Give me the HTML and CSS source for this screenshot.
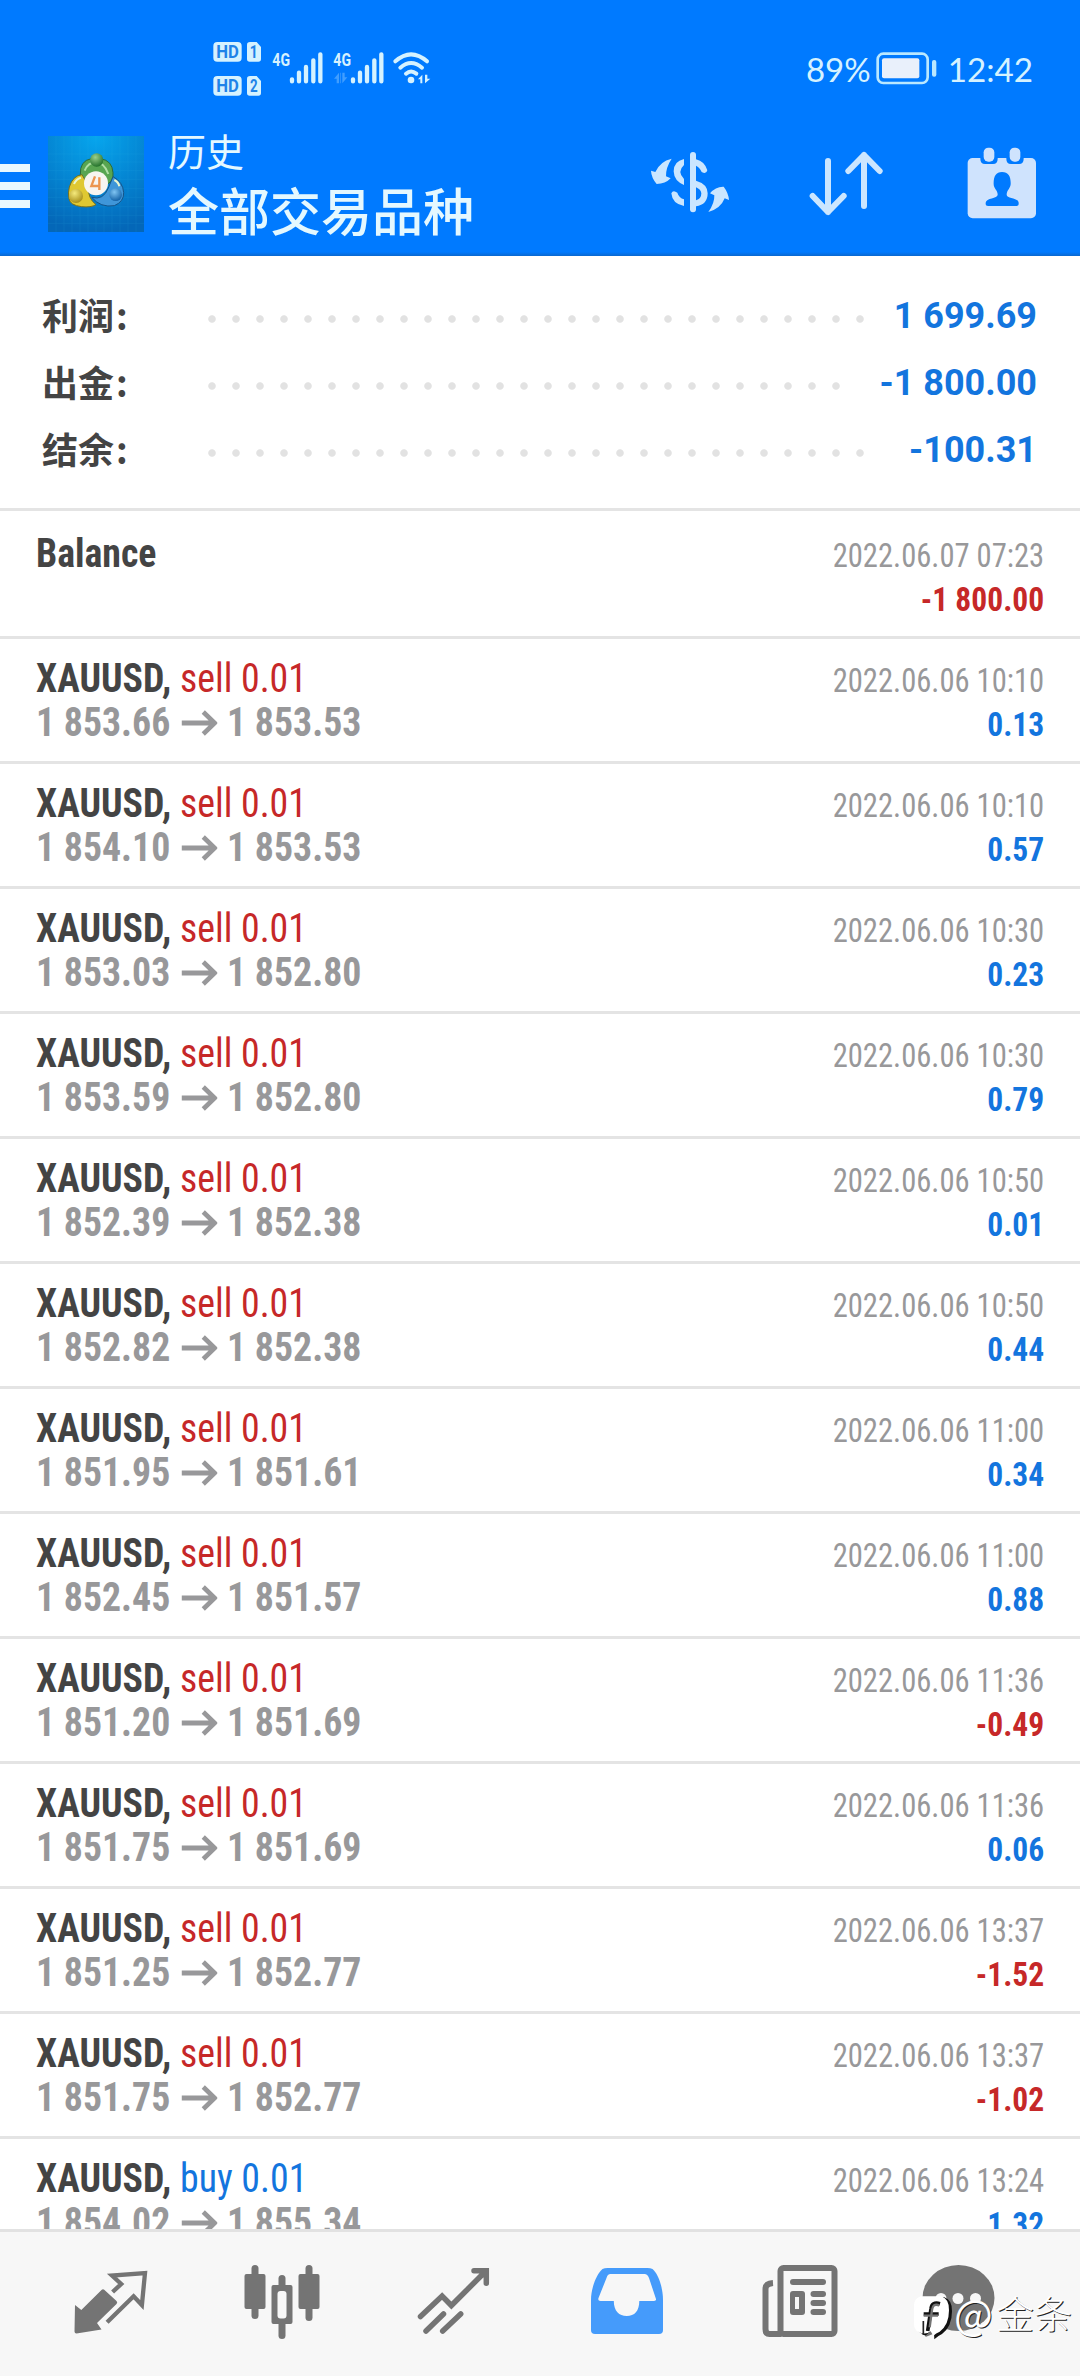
FILE: index.html
```html
<!DOCTYPE html>
<html lang="zh-CN">
<head>
    <meta charset="UTF-8">
    <meta name="viewport" content="width=device-width, initial-scale=1.0">
    <title>历史</title>
    <link rel="stylesheet" href="styles.css">
</head>
<body>
    <div class="app">
        <header class="header">
            <div class="status-bar">
                <svg class="status-left" width="300" height="90" viewBox="0 0 900 270" fill="#d5f2ff">
                    <rect x="100" y="66" width="85" height="59" rx="12"/>
                    <rect x="100" y="168" width="85" height="59" rx="12"/>
                    <path d="M210 66h20l13 15v36q0 8-8 8h-26q-8 0-8-8V74q0-8 9-8z"/>
                    <path d="M210 168h20l13 15v36q0 8-8 8h-26q-8 0-8-8v-43q0-8 9-8z"/>
                    <g class="badge-text">
                        <text x="109" y="113" textLength="68" lengthAdjust="spacingAndGlyphs">HD</text>
                        <text x="109" y="215" textLength="68" lengthAdjust="spacingAndGlyphs">HD</text>
                        <text x="209" y="113" textLength="24" lengthAdjust="spacingAndGlyphs">1</text>
                        <text x="210" y="215" textLength="23" lengthAdjust="spacingAndGlyphs">2</text>
                    </g>
                    <g class="net-text">
                        <text x="277" y="138" textLength="53" lengthAdjust="spacingAndGlyphs">4G</text>
                        <text x="460" y="138" textLength="53" lengthAdjust="spacingAndGlyphs">4G</text>
                    </g>
                    <g stroke="#d5f2ff" stroke-width="13" stroke-linecap="round">
                        <path d="M336 178v6M357 158v26M378 141v43M400 121v63M421 103v81"/>
                        <path d="M519 178v6M540 158v26M561 141v43M583 121v63M604 103v81"/>
                    </g>
                    <path d="M462 176l15-18v32h-7v-14zM483 158v32l-2 0v-32zM487 158v32l15-18h-8v-14z" opacity=".3"/>
                    <g fill="none" stroke="#d5f2ff" stroke-width="12" stroke-linecap="round">
                        <path d="M646 124q47-42 95 0M661 143q32-28 65 0M678 161q15-13 31 0"/>
                    </g>
                    <circle cx="693" cy="180" r="10"/>
                    <path d="M714 178l13-14v26h-6v-12zM735 164v26l16-14h-9v-12z"/>
                </svg>
                <svg class="status-right" width="300" height="80" viewBox="0 0 900 240" fill="#d5f2ff">
                    <g class="clock-text">
                        <text x="78" y="157" textLength="194" lengthAdjust="spacingAndGlyphs">89%</text>
                        <text x="503" y="157" textLength="256" lengthAdjust="spacingAndGlyphs">12:42</text>
                    </g>
                    <rect x="293" y="71" width="150" height="88" rx="17" fill="none" stroke="#b9e8ff" stroke-width="8"/>
                    <rect x="306" y="85" width="112" height="60" rx="6" fill="#e9f0fb"/>
                    <rect x="456" y="90" width="13" height="50" rx="6" fill="#b9e8ff"/>
                </svg>
            </div>
            <div class="toolbar">
                <div class="menu"><i></i><i></i><i></i></div>
                <svg class="logo" width="96" height="96" viewBox="0 0 288 288">
                    <defs>
                        <radialGradient id="sky" cx=".5" cy="0" r="1">
                            <stop offset="0" stop-color="#06a6ee"/>
                            <stop offset=".6" stop-color="#0481cf"/>
                            <stop offset="1" stop-color="#0467b8"/>
                        </radialGradient>
                        <radialGradient id="green" cx=".4" cy=".3" r=".7"><stop offset="0" stop-color="#9ad08b"/><stop offset="1" stop-color="#25722c"/></radialGradient>
                        <radialGradient id="gold" cx=".4" cy=".3" r=".7"><stop offset="0" stop-color="#f5ea7c"/><stop offset="1" stop-color="#a8901a"/></radialGradient>
                        <radialGradient id="blue" cx=".4" cy=".3" r=".7"><stop offset="0" stop-color="#7fc4f2"/><stop offset="1" stop-color="#1664a8"/></radialGradient>
                    </defs>
                    <rect width="288" height="288" fill="url(#sky)"/>
                    <path d="M24 0v288M48 0v288M72 0v288M96 0v288M120 0v288M144 0v288M168 0v288M192 0v288M216 0v288M240 0v288M264 0v288M0 54h288M0 78h288M0 104h288M0 130h288M0 158h288M0 184h288M0 212h288M0 238h288M0 262h288" stroke="#3cc3ee" stroke-width="2" opacity=".14"/>
                    <path d="M97 116q-2-42 33-48h28q35 6 37 42 2 24-15 33l-42-24-34 14z" fill="#58a551" stroke="#2c6b38" stroke-width="3"/>
                    <path d="M102 116q-28 3-38 37-5 18-1 35 3 20 38 24 28 3 43-6-25-18-24-58z" fill="#dfc832" stroke="#78701c" stroke-width="3"/>
                    <path d="M195 122q30 16 32 48 1 27-28 39-41 7-68-25 35 10 50-28z" fill="#3f96d9" stroke="#155387" stroke-width="3"/>
                    <path d="M110 104q10-25 34-25t37 35" fill="none" stroke="#b0dfa5" stroke-width="6"/>
                    <path d="M78 144q6-15 21-19M214 151q-3-14-15-19" fill="none" stroke="#e9f6d0" stroke-width="6"/>
                    <circle cx="146" cy="72" r="20" fill="url(#green)"/>
                    <circle cx="84" cy="180" r="21" fill="url(#gold)"/>
                    <circle cx="203" cy="176" r="19" fill="url(#blue)"/>
                    <circle cx="144" cy="142" r="36" fill="#f7f5f0"/>
                    <path d="M141 121l-11 29h26M154 124v38" fill="none" stroke="#ec9650" stroke-width="7"/>
                </svg>
                <div class="titles">
                    <div class="title-small">历史</div>
                    <div class="title-big">全部交易品种</div>
                </div>
                <svg class="ico-currency" width="80" height="64" viewBox="90 60 240 192" fill="#cbe6ff">
                    <path d="M155 86Q120 94 106 126L93 122Q94 143 110 162Q136 162 152 145L138 139Q137 113 155 86z"/>
                    <path d="M265 246Q284 220 283 196L270 190Q287 169 311 170Q325 188 327 210L314 205Q302 236 265 246z"/>
                    <rect x="210" y="66" width="18" height="181" rx="9"/>
                    <path d="M192 87Q161 94 161 124Q162 153 192 165V147Q170 125 192 105zM192 208Q177 204 172 188Q159 178 154 190Q157 222 192 228z"/>
                    <path d="M228 88Q254 94 262 121Q259 134 245 126Q238 111 228 107zM228 152Q263 162 263 190Q263 224 228 229V211Q244 207 244 190Q243 178 228 172z"/>
                </svg>
                <svg class="ico-sort" width="76" height="66" viewBox="564 60 228 198" fill="none" stroke="#cbe6ff" stroke-width="18" stroke-linecap="round" stroke-linejoin="round">
                    <path d="M624 93v153M578 198l46 48 47-48M732 228V75M685 123l47-48 47 48"/>
                </svg>
                <svg class="ico-calendar" width="72" height="74" viewBox="1038 48 216 222" fill="#cfe3fd">
                    <rect x="1043" y="84" width="205" height="181" rx="15"/>
                    <path d="M1081 76h52v10q0 16-14 16h-24q-14 0-14-16zM1159 76h52v10q0 16-14 16h-24q-14 0-14-16z" fill="#007aff"/>
                    <rect x="1091" y="53" width="32" height="42" rx="14"/>
                    <rect x="1169" y="53" width="32" height="42" rx="14"/>
                    <path d="M1146 126c20 0 27 15 26 37-1 12-12 19-12 31 0 12 35 9 36 24v5q0 5-7 5h-85q-7 0-7-5v-5c1-15 36-12 36-24 0-12-12-19-12-31-1-22 6-37 25-37z" fill="#007aff"/>
                </svg>
            </div>
        </header>

        <section class="summary">
            <div class="sum-row"><span class="sum-label">利润<span class="colon">:</span></span><span class="dots"></span><span class="sum-value">1 699.69</span></div>
            <div class="sum-row"><span class="sum-label">出金<span class="colon">:</span></span><span class="dots dots-short"></span><span class="sum-value">-1 800.00</span></div>
            <div class="sum-row"><span class="sum-label">结余<span class="colon">:</span></span><span class="dots"></span><span class="sum-value">-100.31</span></div>
        </section>

        <main class="deals" id="deals">
            <div class="deal deal-balance">
                <div class="deal-left"><div><b>Balance</b></div></div>
                <div class="deal-right">
                    <div class="time">2022.06.07 07:23</div>
                    <div class="amount red">-1 800.00</div>
                </div>
            </div>
        </main>

        <nav class="tabs">
            <svg width="104" height="76" viewBox="58 144 104 76">
                <path d="M75 185l6.300 5L101.500 170q1.500-1.500 3 0l12 11q1.500 1.500 0 3L97 203l4.500 6.500-25 4q-2 0-2-2z" fill="#747474"/>
                <path d="M112.600 172l8.600-8-9.200-8.500 33-2.500-3.100 32-8.300-8.700-26.500 26" fill="none" stroke="#747474" stroke-width="4.300"/>
            </svg>
            <svg width="104" height="76" viewBox="230.500 144 104 76" fill="#747474">
                <rect x="244" y="154" width="21" height="35" rx="2"/>
                <rect x="251" y="145" width="7" height="54" rx="3.500"/>
                <rect x="298" y="154" width="21" height="35" rx="2"/>
                <rect x="305" y="145" width="7" height="56" rx="3.500"/>
                <rect x="278" y="155" width="7" height="64" rx="3.500"/>
                <rect x="271" y="165" width="21" height="39" rx="2"/>
                <rect x="277" y="171" width="9" height="27.500" rx="3" fill="#f7f7f7"/>
            </svg>
            <svg width="104" height="76" viewBox="403 144 104 76" fill="none" stroke="#747474" stroke-width="5.500" stroke-linecap="round">
                <path d="M420.500 196.500l21.600-20.500 9.300 9.500 34.500-34.500M474 150.700h12.300v12.500" stroke-linejoin="miter"/>
                <path d="M426 211l17.500-17M442.700 211l18-17"/>
            </svg>
            <svg width="104" height="76" viewBox="575.500 144 104 76">
                <path d="M602 149q2-1 5-1h40q3 0 5 1c6 5 10.500 19 10.500 31v30q0 4-4 4h-64q-4 0-4-4v-30c0-12 5.500-26 11.500-31z" fill="#459bfb"/>
                <path d="M610 154h34q3 0 4.500 4l7 21q.5 2-2 2h-14.700c0 10-4.800 15-12.500 15s-13-5-13-15H600q-3 0-2-3l8-20q1-4 4-4z" fill="#f7f7f7"/>
            </svg>
            <svg width="104" height="76" viewBox="748 144 104 76" fill="#747474">
                <rect x="780.500" y="148" width="54" height="66" rx="3" fill="none" stroke="#747474" stroke-width="6"/>
                <path d="M773 163q-7.500.5-7.500 6v40q0 5 4 5h12" fill="none" stroke="#747474" stroke-width="6"/>
                <rect x="790" y="159" width="36" height="6" rx="3"/>
                <rect x="790" y="171" width="15" height="24" rx="3"/>
                <rect x="795" y="177" width="4" height="12" fill="#f7f7f7"/>
                <rect x="810.500" y="171" width="15.500" height="6" rx="3"/>
                <rect x="810.500" y="180" width="15.500" height="6" rx="3"/>
                <rect x="810.500" y="189" width="15.500" height="6" rx="3"/>
            </svg>
            <svg width="104" height="76" viewBox="920.500 144 104 76">
                <ellipse cx="958" cy="178" rx="36" ry="33" fill="#747474"/>
                <path d="M925 190v27l20-8z" fill="#747474"/>
                <g fill="#f7f7f7"><circle cx="940.500" cy="178.500" r="5.500"/><circle cx="957.500" cy="178.500" r="5.500"/><circle cx="975" cy="178.500" r="5.500"/></g>
            </svg>
        </nav>

        <div class="mark">
            <svg width="40" height="46" viewBox="102 166 120 138">
                <path d="M132 172h58q24 8 23 42 0 46-30 68-13 6-23 16l-1-18-10-7-16 14-19-12q-12-8-12-25v-50q0-20 18-26z" transform="translate(3 1)" fill="#111"/>
                <path d="M122 170h62q24 8 23 42 0 44-28 64-11 5-19 12l-8-13q-15 12-35 3-15-8-15-26v-56q0-18 20-26z" fill="#fff"/>
                <path d="M180 192q-25-7-27 16l-10 66M131 223h45" fill="none" stroke="#111" stroke-width="11"/>
                <path d="M178 197q-20-7-22 14l-7 52M131 228h43" fill="none" stroke="#747474" stroke-width="7"/>
                <path d="M130 244v42" fill="none" stroke="#222" stroke-width="5"/>
            </svg>
            <span class="at">@</span><span>金条</span>
        </div>
    </div>

    <script>
        const deals = [
            ['sell', '1 853.66', '1 853.53', '10:10', '0.13'],
            ['sell', '1 854.10', '1 853.53', '10:10', '0.57'],
            ['sell', '1 853.03', '1 852.80', '10:30', '0.23'],
            ['sell', '1 853.59', '1 852.80', '10:30', '0.79'],
            ['sell', '1 852.39', '1 852.38', '10:50', '0.01'],
            ['sell', '1 852.82', '1 852.38', '10:50', '0.44'],
            ['sell', '1 851.95', '1 851.61', '11:00', '0.34'],
            ['sell', '1 852.45', '1 851.57', '11:00', '0.88'],
            ['sell', '1 851.20', '1 851.69', '11:36', '-0.49'],
            ['sell', '1 851.75', '1 851.69', '11:36', '0.06'],
            ['sell', '1 851.25', '1 852.77', '13:37', '-1.52'],
            ['sell', '1 851.75', '1 852.77', '13:37', '-1.02'],
            ['buy', '1 854.02', '1 855.34', '13:24', '1.32']
        ];

        const arrow = '<svg class="arrow" width="38" height="26" viewBox="0 0 38 26"><path d="M0 13h35M23 2l12 11-12 11" fill="none" stroke="#98989a" stroke-width="5"/></svg>';

        document.getElementById('deals').innerHTML += deals.map(([type, open, close, time, profit]) => `
            <div class="deal">
                <div class="deal-left">
                    <div><b>XAUUSD,</b> <span class="${type === 'sell' ? 'red' : 'blue'}">${type} 0.01</span></div>
                    <div class="prices"><span>${open}</span>${arrow}<span>${close}</span></div>
                </div>
                <div class="deal-right">
                    <div class="time">2022.06.06 ${time}</div>
                    <div class="amount ${profit[0] === '-' ? 'red' : 'blue'}">${profit}</div>
                </div>
            </div>`).join('');
    </script>
</body>
</html>
```
FILE: styles.css
```css
* {
    box-sizing: border-box;
}
body {
    margin: 0;
    background: #fff;
    font-family: Roboto, "Noto Sans CJK SC", sans-serif;
    color: #444;
}
svg {
    display: block;
    flex: none;
}
.app {
    position: relative;
    width: 1080px;
    height: 2376px;
    overflow: hidden;
    display: flex;
    flex-direction: column;
}
.header {
    height: 256px;
    flex: none;
    background: linear-gradient(#007aff 252px, #0a68cf 256px);
}
.status-bar {
    height: 110px;
    padding: 20px 0 0 180px;
    display: flex;
}
.status-right {
    margin: 10px 0 0 300px;
}
.badge-text {
    font: 700 54px Roboto, sans-serif;
    fill: #1f83e8;
}
.net-text {
    font: 700 54px Roboto, sans-serif;
}
.clock-text {
    font: 400 101px Lato, sans-serif;
}
.toolbar {
    display: flex;
    align-items: flex-start;
}
.menu {
    width: 30px;
    margin: 54px 18px 0 0;
    display: flex;
    flex-direction: column;
    gap: 10px;
}
.menu i {
    height: 8px;
    background: #e9f8ff;
}
.logo {
    margin-top: 26px;
}
.titles {
    width: 481px;
    margin: 19px 0 0 24px;
    color: #e4f8ff;
    white-space: nowrap;
}
.title-small {
    font-size: 38px;
    line-height: 48px;
}
.title-big {
    font-size: 51px;
    line-height: 73px;
    font-weight: 500;
}
.ico-currency {
    margin: 40px 0 0 1px;
}
.ico-sort {
    margin: 40px 0 0 78px;
}
.ico-calendar {
    margin: 36px 0 0 82px;
}
.summary {
    height: 255px;
    flex: none;
    padding: 27px 43px 0 42px;
    border-bottom: 3px solid #e4e4e4;
}
.sum-row {
    height: 67px;
    display: flex;
    align-items: center;
}
.sum-label {
    width: 158px;
    font-family: "Noto Sans CJK SC", sans-serif;
    font-size: 36px;
    line-height: 63px;
    height: 67px;
    font-weight: 700;
}
.colon {
    margin-left: 2px;
}
.dots {
    width: 672px;
    height: 8px;
    margin-top: 5px;
    background: radial-gradient(circle, #e2e2e2 3.300px, transparent 4.200px) 0 0 / 24px 8px;
}
.dots-short {
    width: 648px;
}
.sum-value {
    margin-left: auto;
    font-size: 36px;
    line-height: 67px;
    font-weight: 700;
    color: #1375de;
}
.deals {
    flex: 1;
    min-height: 0;
    overflow: hidden;
}
.deal {
    height: 125px;
    padding: 17px 36px 0;
    border-bottom: 3px solid #e4e4e4;
    display: flex;
    justify-content: space-between;
    font-family: "Roboto Condensed", Roboto, sans-serif;
    font-stretch: 75%;
    line-height: 44px;
    white-space: nowrap;
}
.deal-balance {
    height: 128px;
    padding-top: 20px;
}
.deal-left {
    padding-top: 1px;
    font-size: 40px;
    transform: scaleX(.945);
    transform-origin: left;
}
.deal-right {
    padding-top: 3px;
    font-size: 33px;
    text-align: right;
}
.prices {
    display: flex;
    align-items: center;
    font-weight: 700;
    color: #98989a;
}
.arrow {
    margin: 0 10px 0 12px;
}
.time {
    color: #98989a;
    transform: scaleX(.927);
    transform-origin: right;
}
.amount {
    font-weight: 700;
    transform: scaleX(.955);
    transform-origin: right;
}
.red {
    color: #c62828;
}
.blue {
    color: #1375de;
}
.tabs {
    height: 147px;
    flex: none;
    padding: 32px 0 0 58px;
    display: flex;
    gap: 68.5px;
    background: #f7f7f7;
    border-top: 3px solid #e2e2e2;
}
.mark {
    position: absolute;
    left: 914px;
    top: 2295px;
    display: flex;
    font-family: "Noto Sans CJK SC", sans-serif;
    font-weight: 300;
    font-size: 38px;
    line-height: 34px;
    color: #fff;
    text-shadow: 1px 1px 0 #222;
}
.at {
    width: 42px;
    font-size: 41px;
    font-weight: 400;
}
```
